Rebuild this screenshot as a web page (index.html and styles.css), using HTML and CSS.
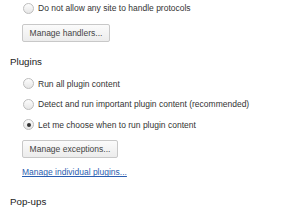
FILE: index.html
```html
<!DOCTYPE html>
<html>
<head>
  <title>Settings</title>
  <link rel="stylesheet" href="styles.css">
</head>
<body>
<div class="page">
  <div class="section-body first">
    <label class="radio-row">
      <span class="radio"></span>
      <span>Do not allow any site to handle protocols</span>
    </label>
    <button class="btn btn-handlers">Manage handlers...</button>
  </div>

  <h3 class="heading heading-plugins">Plugins</h3>
  <div class="section-body">
    <label class="radio-row">
      <span class="radio"></span>
      <span>Run all plugin content</span>
    </label>
    <label class="radio-row">
      <span class="radio"></span>
      <span>Detect and run important plugin content (recommended)</span>
    </label>
    <label class="radio-row">
      <span class="radio checked"></span>
      <span>Let me choose when to run plugin content</span>
    </label>
    <button class="btn btn-exceptions">Manage exceptions...</button>
    <div class="link-row"><a href="#">Manage individual plugins...</a></div>
  </div>

  <h3 class="heading heading-popups">Pop-ups</h3>
</div>
</body>
</html>
```

FILE: styles.css
```css
body {
  margin: 0;
  background: #fff;
  font-family: "Liberation Sans", Arial, sans-serif;
  font-size: 8.5px;
  color: #333;
}

.page {
  padding-left: 10px;
}

.section-body {
  margin-left: 12px;
}
.section-body.first {
  margin-top: -2px;
}

.radio-row {
  display: flex;
  align-items: center;
  height: 20.5px;
}

.radio {
  width: 11px;
  height: 11px;
  box-sizing: border-box;
  border: 1px solid #bdbdbd;
  border-radius: 50%;
  background: linear-gradient(#fdfdfd, #e6e6e6);
  margin-left: 1px;
  margin-right: 4px;
  display: flex;
  align-items: center;
  justify-content: center;
}
.radio.checked::after {
  content: "";
  width: 4px;
  height: 4px;
  border-radius: 50%;
  background: #333;
}

.btn {
  display: block;
  height: 18px;
  box-sizing: border-box;
  padding: 0;
  text-align: center;
  white-space: nowrap;
  border: 1px solid #c8c8c8;
  border-radius: 2px;
  background: linear-gradient(#fbfbfb, #ececec);
  font-family: inherit;
  font-size: 8.5px;
  color: #444;
}
.btn-handlers {
  width: 88px;
  margin-top: 5px;
}
.btn-exceptions {
  width: 96px;
  margin-top: 4.5px;
}

.link-row {
  line-height: 12px;
  margin-top: 8.5px;
}
.link-row a {
  color: #2a5db0;
  text-decoration-skip-ink: none;
}

.heading {
  margin: 0;
  font-size: 9.75px;
  font-weight: normal;
  line-height: 12px;
  color: #222;
}
.heading-plugins {
  margin-top: 14px;
  margin-bottom: 6px;
}
.heading-popups {
  margin-top: 18px;
}
```
